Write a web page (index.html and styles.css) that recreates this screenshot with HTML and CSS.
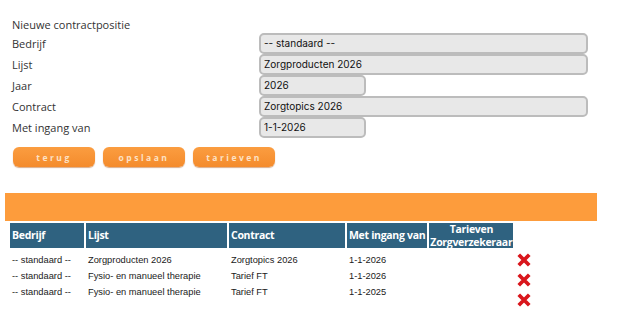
FILE: index.html
```html
<!DOCTYPE html>
<html lang="nl">

<head>
    <meta charset="UTF-8">
    <title>Nieuwe contractpositie</title>
    <link rel="stylesheet" href="styles.css">
</head>

<body>
    <div class="form">
        <div class="title">Nieuwe contractpositie</div>
        <div class="row">
            <span>Bedrijf</span>
            <div class="field wide">-- standaard --</div>
        </div>
        <div class="row">
            <span>Lijst</span>
            <div class="field wide">Zorgproducten 2026</div>
        </div>
        <div class="row">
            <span>Jaar</span>
            <div class="field small">2026</div>
        </div>
        <div class="row">
            <span>Contract</span>
            <div class="field wide">Zorgtopics 2026</div>
        </div>
        <div class="row">
            <span>Met ingang van</span>
            <div class="field small">1-1-2026</div>
        </div>
        <div class="buttons">
            <button class="btn">terug</button>
            <button class="btn">opslaan</button>
            <button class="btn">tarieven</button>
        </div>
    </div>

    <div class="bar"></div>

    <div class="list">
        <table>
            <thead>
                <tr>
                    <th class="c1">Bedrijf</th>
                    <th class="c2">Lijst</th>
                    <th class="c3">Contract</th>
                    <th class="c4">Met ingang van</th>
                    <th class="c5">Tarieven<br>Zorgverzekeraar</th>
                </tr>
            </thead>
            <tbody>
                <tr>
                    <td>-- standaard --</td>
                    <td>Zorgproducten 2026</td>
                    <td>Zorgtopics 2026</td>
                    <td>1-1-2026</td>
                    <td></td>
                </tr>
                <tr>
                    <td>-- standaard --</td>
                    <td>Fysio- en manueel therapie</td>
                    <td>Tarief FT</td>
                    <td>1-1-2026</td>
                    <td></td>
                </tr>
                <tr>
                    <td>-- standaard --</td>
                    <td>Fysio- en manueel therapie</td>
                    <td>Tarief FT</td>
                    <td>1-1-2025</td>
                    <td></td>
                </tr>
            </tbody>
        </table>
        <div class="deletes">
            <svg class="del" viewBox="0 0 12 12"><path d="M1.5 1.5L10.5 10.5M10.5 1.5L1.5 10.5" /></svg>
            <svg class="del" viewBox="0 0 12 12"><path d="M1.5 1.5L10.5 10.5M10.5 1.5L1.5 10.5" /></svg>
            <svg class="del" viewBox="0 0 12 12"><path d="M1.5 1.5L10.5 10.5M10.5 1.5L1.5 10.5" /></svg>
        </div>
    </div>
</body>

</html>
```

FILE: styles.css
```css
* {
    margin: 0;
    padding: 0;
    box-sizing: border-box;
}

body {
    background: #fff;
    font-family: "Open Sans", "Noto Sans", sans-serif;
    color: #333;
}

.form {
    padding: 17px 0 0 12px;
}

.title {
    font-size: 11px;
    line-height: 15px;
    height: 16px;
}

.row {
    display: flex;
    align-items: center;
    height: 21px;
    font-size: 11px;
}

.row span {
    width: 247px;
}

.field {
    height: 21px;
    background: #e8e8e8;
    border: 2px solid #bcbcbc;
    border-radius: 5px;
    font-family: "Inter", "Liberation Sans", sans-serif;
    font-size: 10px;
    color: #111;
    padding-left: 3px;
    line-height: 17px;
}

.field.wide {
    width: 329px;
}

.field.small {
    width: 107px;
}

.buttons {
    display: flex;
    gap: 8px;
    margin-top: 9px;
    padding-left: 1px;
}

.btn {
    width: 82px;
    height: 20px;
    border: none;
    border-radius: 6px;
    background: linear-gradient(#fb9d40, #f48b2c);
    box-shadow: 0 1px 1px rgba(180, 90, 20, 0.5);
    color: #fde2c6;
    font-family: "Open Sans", sans-serif;
    font-weight: bold;
    font-size: 8.5px;
    letter-spacing: 2.5px;
}

.bar {
    margin: 26px 20px 0 5px;
    height: 28px;
    background: #fd9c3c;
}

.list {
    display: flex;
    align-items: flex-start;
    padding-left: 8px;
}

table {
    border-spacing: 2px;
    border-collapse: separate;
}

th {
    background: #2f6280;
    color: #fff;
    font-family: "Open Sans", sans-serif;
    font-weight: bold;
    font-size: 10.5px;
    line-height: 13px;
    height: 25px;
    text-align: left;
    padding: 0 2px;
    letter-spacing: -0.3px;
    white-space: nowrap;
}

th.c1 { width: 74px; }
th.c2 { width: 141px; }
th.c3 { width: 116px; }
th.c4 { width: 80px; }
th.c5 { width: 84px; text-align: center; padding: 0; line-height: 12.5px; }

td {
    font-family: "Liberation Sans", Arial, sans-serif;
    font-size: 9.3px;
    line-height: 13px;
    color: #1a1a1a;
    height: 14px;
    padding: 0 2px;
    white-space: nowrap;
}

tbody tr:first-child td {
    padding-top: 3px;
    height: 17px;
}

.deletes {
    display: flex;
    flex-direction: column;
    padding-top: 29px;
    padding-left: 2px;
}

.del {
    width: 14px;
    height: 20px;
    stroke: #d9161c;
    stroke-width: 3.2;
    fill: none;
}
```
